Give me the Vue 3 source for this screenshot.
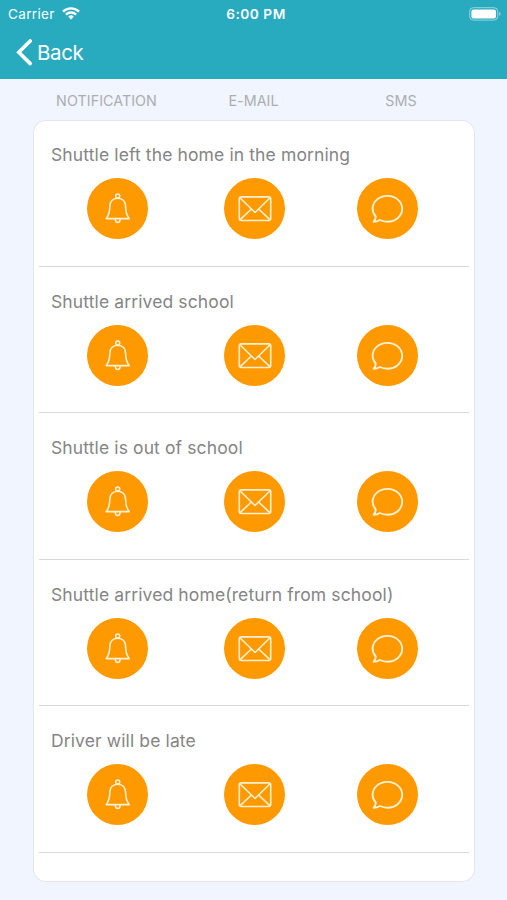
<script setup>
import { ref } from 'vue';

const columns = ['NOTIFICATION', 'E-MAIL', 'SMS'];

const events = ref([
  { id: 1, title: 'Shuttle left the home in the morning' },
  { id: 2, title: 'Shuttle arrived school' },
  { id: 3, title: 'Shuttle is out of school' },
  { id: 4, title: 'Shuttle arrived home(return from school)' },
  { id: 5, title: 'Driver will be late' },
]);
</script>

<template>
  <div class="screen">
    <header class="header">
      <div class="status-bar">
        <div class="carrier">
          <span>Carrier</span>
          <svg class="wifi" width="18" height="13" viewBox="0 0 18 13" fill="none" stroke="#fff" stroke-width="2.3">
            <path d="M1 4.6a11.3 11.3 0 0 1 16 0" />
            <path d="M3.9 7.6a7.2 7.2 0 0 1 10.2 0" />
            <path d="M9 12.4 6.2 9.7a4 4 0 0 1 5.6 0z" fill="#fff" stroke="none" />
          </svg>
        </div>
        <span class="clock">6:00 PM</span>
        <svg class="battery" width="33" height="14" viewBox="0 0 33 14">
          <rect x="0.7" y="0.7" width="28" height="12.4" rx="3.6" fill="none" stroke="#fff" stroke-opacity=".5" />
          <rect x="2.4" y="2.4" width="24.6" height="9" rx="2" fill="#fff" />
          <path d="M30.2 4.8c2 .8 2 3.4 0 4.2z" fill="#fff" fill-opacity=".5" />
        </svg>
      </div>
      <button class="back" type="button">
        <svg width="16" height="27" viewBox="0 0 16 27" fill="none" stroke="#fff" stroke-width="3.6">
          <path d="M14.2 2 2.8 13.3l11.4 11.3" stroke-linecap="round" />
        </svg>
        <span>Back</span>
      </button>
    </header>

    <div class="columns">
      <span v-for="column in columns" :key="column">{{ column }}</span>
    </div>

    <main class="card">
      <section v-for="event in events" :key="event.id" class="event">
        <h2 class="title">{{ event.title }}</h2>
        <div class="actions">
          <button type="button" class="circle" aria-label="Notification">
            <svg width="61" height="61" viewBox="0 0 61 61">
              <circle cx="30.7" cy="18" r="2" />
              <path d="M19.2 40.6c2.6-3.2 3.6-6.8 3.6-12 0-5 3-8.4 7.9-8.4s7.9 3.4 7.9 8.4c0 5.200 1 8.800 3.600 12z" />
              <path d="M28.200 41c.2 4.600 4.800 4.600 5 0" />
            </svg>
          </button>
          <button type="button" class="circle" aria-label="E-mail">
            <svg width="61" height="61" viewBox="0 0 61 61">
              <rect x="15.3" y="18.9" width="31.4" height="23.6" rx="2" />
              <path d="M15.9 19.7 31 34.5l15.1-14.8M15.9 41.8l11.500-10.800M46.100 41.800 34.600 31" />
            </svg>
          </button>
          <button type="button" class="circle" aria-label="SMS">
            <svg width="61" height="61" viewBox="0 0 61 61">
              <path class="bubble" d="M30.4 17.9c8.300 0 14.800 5.700 14.800 12.900s-6.500 12.900-14.800 12.900c-2.800 0-5.200-.6-7.500-1.700-2 1.200-4 1.700-6.300 1.700 1.500-1.600 2.200-3.500 2.100-5.200-2-2.200-3.100-4.700-3.100-7.700 0-7.200 6.500-12.900 14.800-12.900z" />
            </svg>
          </button>
        </div>
      </section>
    </main>
  </div>
</template>

<style>
body {
  margin: 0;
  background-color: #f0f5ff;
}
</style>

<style scoped>
.screen {
  height: 900px;
  overflow: hidden;
  background-color: #f0f5ff;
  font-family: Inter, "Liberation Sans", sans-serif;
}
button {
  padding: 0;
  border: none;
  background: none;
  font-family: inherit;
  cursor: pointer;
}
svg {
  display: block;
}
.header {
  box-sizing: border-box;
  height: 79px;
  background-color: #28abbe;
  color: #fff;
}
.status-bar {
  display: grid;
  grid-template-columns: 1fr auto 1fr;
  align-items: center;
  height: 27px;
  padding: 0 5px 0 8px;
  font-size: 13.5px;
}
.carrier {
  display: flex;
  align-items: center;
  gap: 7.5px;
  letter-spacing: 0.35px;
}
.clock {
  padding-left: 2px;
  font-size: 13.7px;
  font-weight: 600;
  letter-spacing: 0.5px;
}
.battery {
  justify-self: end;
}
.back {
  display: flex;
  align-items: center;
  gap: 5px;
  height: 50px;
  padding-left: 16px;
  color: #fff;
  font-size: 20.5px;
  letter-spacing: -0.35px;
}
.columns {
  display: grid;
  grid-template-columns: 147px 147px 148px;
  height: 42px;
  padding-left: 33px;
  align-items: center;
  text-align: center;
  font-size: 14.3px;
  letter-spacing: 0.05px;
  color: #acadb1;
}
.card {
  width: 440px;
  height: 760px;
  margin-left: 34px;
  border-radius: 12px;
  background-color: #fff;
  box-shadow: 0 0 0 1px #e4e6eb;
}
.event {
  box-sizing: border-box;
  height: 146.6px;
  margin: 0 5px;
  padding: 22px 0 0 12px;
  border-bottom: 1.5px solid #d8d8d8;
}
.event:first-child {
  height: 145.6px;
}
.title {
  margin: 0;
  height: 35px;
  line-height: 24px;
  font-size: 17.5px;
  font-weight: 400;
  letter-spacing: 0.12px;
  white-space: nowrap;
  color: #858585;
}
.event:not(:first-child) {
  padding-top: 23px;
}
.actions {
  display: flex;
  padding-left: 36px;
}
.circle {
  width: 61px;
  height: 61px;
  border-radius: 50%;
  background-color: #ff9900;
}
.circle + .circle {
  margin-left: 75.5px;
}
.circle:last-child {
  margin-left: 72.5px;
}
.circle svg {
  fill: none;
  stroke: #fff1d2;
  stroke-width: 1.6;
  stroke-linejoin: round;
}
.circle .bubble {
  stroke-width: 1.9;
}
</style>
